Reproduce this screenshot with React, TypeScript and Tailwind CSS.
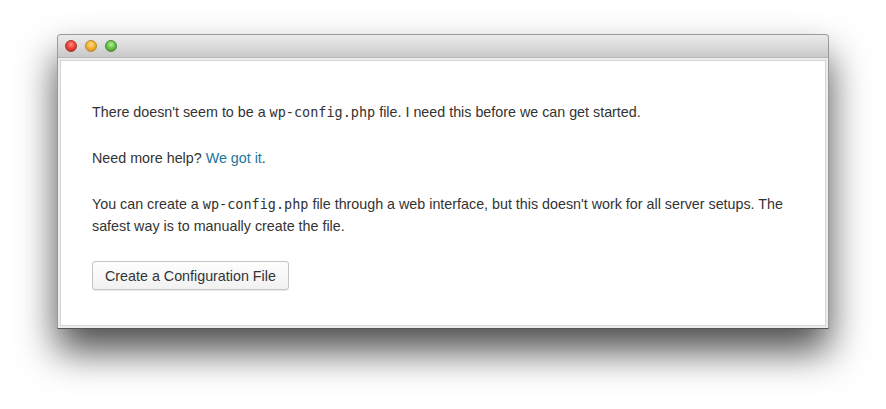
import React from 'react';

const Light = ({ color }: { color: 'red' | 'yellow' | 'green' }) => {
  const cls =
    color === 'red'
      ? 'bg-[radial-gradient(circle_at_50%_35%,#ff8e86_0%,#f0443a_45%,#b8221b_100%)] border-[#a6342c]'
      : color === 'yellow'
      ? 'bg-[radial-gradient(circle_at_50%_35%,#ffe08a_0%,#f5b33a_45%,#c98414_100%)] border-[#b88a2c]'
      : 'bg-[radial-gradient(circle_at_50%_35%,#b8f29a_0%,#6cc64a_45%,#3e8e22_100%)] border-[#4f8a34]';
  return <span className={`w-[12px] h-[12px] rounded-full border ${cls}`} />;
};

const Code = ({ children }: { children: React.ReactNode }) => (
  <code className="font-['DejaVu_Sans_Mono',monospace] text-[13.5px]">{children}</code>
);

export default function App() {
  return (
    <div className="min-h-[409px] bg-white pt-[34px] pl-[57px] font-['Liberation_Sans',Arial,sans-serif]">
      <div className="w-[772px] bg-[#ececec] border border-[#9a9a9a] border-b-[#555] rounded-t-[4px] shadow-[0_22px_38px_rgba(0,0,0,0.7)]">
        {/* Title bar */}
        <div className="h-[23px] flex items-center gap-[8px] pl-[7px] rounded-t-[4px] bg-[linear-gradient(#ebebeb,#c9c9c9)] border-b border-[#b5b5b5]">
          <Light color="red" />
          <Light color="yellow" />
          <Light color="green" />
        </div>

        {/* Content */}
        <div className="p-[2px]">
          <div className="bg-white border border-[#d6d6d6] pt-[40px] pb-[35px] px-[31px] text-[14.3px] leading-[22px] text-[#333]">
            <div className="flex flex-col gap-[24px]">
              <p>
                There doesn't seem to be a <Code>wp-config.php</Code> file. I need this before we can get started.
              </p>
              <p>
                Need more help? <a className="text-[#21759b]">We got it</a>.
              </p>
              <p>
                You can create a <Code>wp-config.php</Code> file through a web interface, but this doesn't work for all
                server setups. The safest way is to manually create the file.
              </p>
              <div>
                <button className="h-[29px] px-[12px] rounded-[3px] border border-[#c4c4c4] bg-[linear-gradient(#fefefe,#f1f1f1)] shadow-[0_1px_0_rgba(0,0,0,0.08)] text-[14.3px] text-[#333]">
                  Create a Configuration File
                </button>
              </div>
            </div>
          </div>
        </div>
      </div>
    </div>
  );
}
